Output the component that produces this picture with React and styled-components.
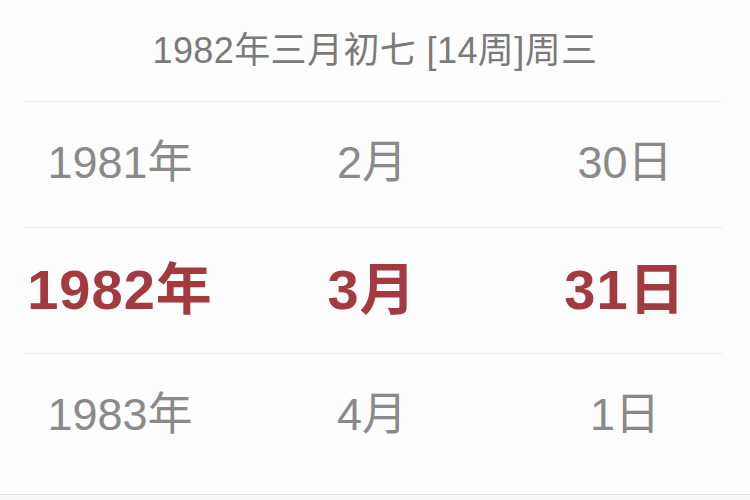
import styled, { createGlobalStyle } from "styled-components";

const GlobalStyle = createGlobalStyle`
  html, body {
    margin: 0;
    padding: 0;
    background: #fdfdfd;
  }
`;

const Page = styled.div`
  width: 750px;
  height: 500px;
  display: flex;
  flex-direction: column;
  background: #fdfdfd;
  font-family: "Liberation Sans", "Noto Sans CJK SC", sans-serif;
  overflow: hidden;
`;

const Header = styled.div`
  height: 101px;
  display: flex;
  align-items: center;
  justify-content: center;
  padding-bottom: 8px;
  box-sizing: border-box;
  color: #7a7a7a;
  font-size: 36px;
  letter-spacing: 0.4px;
`;

const Wheel = styled.div`
  display: flex;
  flex-direction: column;
  padding: 0 28px 0 25px;
`;

const Row = styled.div`
  height: 125px;
  display: grid;
  grid-template-columns: 1fr 1fr 1fr;
  align-items: center;
  margin: 0 -28px 0 -25px;
  padding-bottom: 12px;
  box-sizing: border-box;
`;

const Cell = styled.div`
  text-align: center;
  font-size: ${(p) => (p.$active ? "56px" : "45px")};
  font-weight: ${(p) => (p.$active ? 700 : 400)};
  letter-spacing: ${(p) => (p.$active ? "1px" : "0")};
  color: ${(p) => (p.$active ? "#a33a3f" : "#8a8a8a")};
  transform: translateX(${(p) => p.$shift || 0}px);
`;

const Divider = styled.div`
  height: 1px;
  background: #ececec;
`;

const Bottom = styled.div`
  margin-top: auto;
  height: 5px;
  border-top: 1px solid #e3e3e3;
  background: #f7f7f7;
`;

const rows = [
  ["1981年", "2月", "30日"],
  ["1982年", "3月", "31日"],
  ["1983年", "4月", "1日"],
];

function RowBlock({ cells, active, last }) {
  return (
    <>
      <Row>
        <Cell $active={active} $shift={-5}>{cells[0]}</Cell>
        <Cell $active={active} $shift={-3}>{cells[1]}</Cell>
        <Cell $active={active}>{cells[2]}</Cell>
      </Row>
      {!last && <Divider />}
    </>
  );
}

export default function App() {
  return (
    <>
      <GlobalStyle />
      <Page>
        <Header>1982年三月初七 [14周]周三</Header>
        <Wheel>
          <Divider />
          {rows.map((r, i) => (
            <RowBlock key={i} cells={r} active={i === 1} last={i === rows.length - 1} />
          ))}
        </Wheel>
        <Bottom />
      </Page>
    </>
  );
}
